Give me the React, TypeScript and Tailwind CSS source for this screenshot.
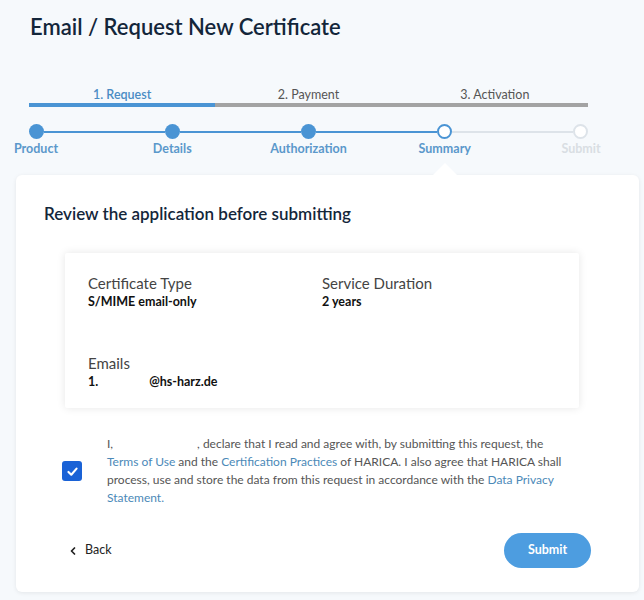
import { ChevronLeft } from "lucide-react";

const PHASES = [
  { label: "1. Request", active: true },
  { label: "2. Payment", active: false },
  { label: "3. Activation", active: false },
];

const STEPS = [
  { label: "Product", state: "done" },
  { label: "Details", state: "done" },
  { label: "Authorization", state: "done" },
  { label: "Summary", state: "current" },
  { label: "Submit", state: "todo" },
] as const;

const Circle = ({ state }: { state: "done" | "current" | "todo" }) => {
  if (state === "done")
    return <div className="h-[15px] w-[15px] shrink-0 rounded-full bg-[#4a94d4]" />;
  if (state === "current")
    return (
      <div className="h-[15px] w-[15px] shrink-0 rounded-full border-2 border-[#4a94d4] bg-white" />
    );
  return (
    <div className="h-[15px] w-[15px] shrink-0 rounded-full border-2 border-[#dde3e9] bg-white" />
  );
};

export default function App() {
  return (
    <div
      className="min-h-[600px] w-full overflow-hidden bg-[#f6f9fc] pb-[8px] text-[#333]"
      style={{ fontFamily: "Lato, 'Open Sans', sans-serif" }}
    >
      <h1 className="pl-[30px] pt-[12px] text-[22px] font-semibold leading-[30px] text-[#13263a]">
        Email / Request New Certificate
      </h1>

      {/* phases */}
      <div className="ml-[29px] mt-[45px] flex w-[559px]">
        {PHASES.map((p) => (
          <div key={p.label} className="flex flex-1 flex-col items-center">
            <span
              className={
                p.active
                  ? "text-[12.5px] font-semibold leading-[16px] text-[#4a8cc4]"
                  : "text-[12.5px] leading-[16px] text-[#555]"
              }
            >
              {p.label}
            </span>
            <div
              className={
                p.active ? "h-[4px] w-full bg-[#4a94d4]" : "h-[4px] w-full bg-[#a3a3a3]"
              }
            />
          </div>
        ))}
      </div>

      {/* stepper */}
      <div className="mt-[17px] flex items-center pl-[29px] pr-[56px]">
        {STEPS.map((s, i) => (
          <div
            key={s.label}
            className={i < STEPS.length - 1 ? "flex flex-1 items-center" : "flex items-center"}
          >
            <Circle state={s.state} />
            {i < STEPS.length - 1 && (
              <div
                className={
                  i < 3 ? "h-[2px] flex-1 bg-[#4a94d4]" : "h-[2px] flex-1 bg-[#dde3e9]"
                }
              />
            )}
          </div>
        ))}
      </div>
      <div className="mt-[2px] flex w-[617px] justify-between">
        {STEPS.map((s) => (
          <div key={s.label} className="flex w-[72px] justify-center">
            <span
              className={
                s.state === "todo"
                  ? "whitespace-nowrap text-[12.5px] font-bold leading-[16px] text-[#d9dee3]"
                  : "whitespace-nowrap text-[12.5px] font-bold leading-[16px] text-[#5b98cb]"
              }
            >
              {s.label}
            </span>
          </div>
        ))}
      </div>

      {/* card */}
      <div className="relative ml-[16px] mr-[5px] mt-[18px] rounded-[6px] bg-white pb-[24px] shadow-[0_1px_4px_rgba(0,0,0,0.08)]">
        <svg
          className="absolute -top-[12px] left-[416px]"
          width="26"
          height="13"
          viewBox="0 0 26 13"
        >
          <path d="M0 13 L13 0 L26 13 Z" fill="#fff" />
        </svg>

        <h2 className="pl-[28px] pt-[28px] text-[17px] font-semibold leading-[22px] text-[#13263a]">
          Review the application before submitting
        </h2>

        <div className="ml-[49px] mr-[60px] mt-[28px] rounded-[2px] bg-white px-[23px] pt-[20px] pb-[17px] shadow-[0_0_8px_rgba(0,0,0,0.1)]">
          <div className="grid grid-cols-[234px_1fr]">
            <div>
              <div className="text-[15px] leading-[20px] text-[#444]">Certificate Type</div>
              <div className="text-[12.5px] font-bold leading-[18px] text-[#111]">
                S/MIME email-only
              </div>
            </div>
            <div>
              <div className="text-[15px] leading-[20px] text-[#444]">Service Duration</div>
              <div className="text-[12.5px] font-bold leading-[18px] text-[#111]">2 years</div>
            </div>
          </div>
          <div className="mt-[42px]">
            <div className="text-[15px] leading-[20px] text-[#444]">Emails</div>
            <div className="text-[12.5px] font-bold leading-[18px] text-[#111]">
              1.<span className="inline-block w-[51px]" />@hs-harz.de
            </div>
          </div>
        </div>

        <div className="mt-[27px] flex items-center pl-[46px]">
          <div className="flex h-[20px] w-[20px] shrink-0 items-center justify-center rounded-[3px] bg-[#1a62d6]">
            <svg width="13" height="13" viewBox="0 0 16 16">
              <path
                d="M3 8.5 L6.5 12 L13 4.5"
                fill="none"
                stroke="#fff"
                strokeWidth="2.6"
                strokeLinecap="round"
                strokeLinejoin="round"
              />
            </svg>
          </div>
          <p className="ml-[25px] w-[470px] text-[12px] leading-[18px] text-[#555]">
            I,<span className="inline-block w-[84px]" />, declare that I read and agree with, by
            submitting this request, the <a className="text-[#4b89b8]">Terms of Use</a> and the{" "}
            <a className="text-[#4b89b8]">Certification Practices</a> of HARICA. I also agree that
            HARICA shall process, use and store the data from this request in accordance with the{" "}
            <a className="text-[#4b89b8]">Data Privacy Statement.</a>
          </p>
        </div>

        <div className="mt-[26px] flex items-center justify-between pl-[51px] pr-[48px]">
          <button className="flex items-center gap-[6px] text-[12.5px] text-[#222]">
            <ChevronLeft size={12} strokeWidth={3.5} />
            Back
          </button>
          <button className="h-[35px] w-[87px] rounded-full bg-[#4d9de0] text-[12.5px] font-bold text-white">
            Submit
          </button>
        </div>
      </div>
    </div>
  );
}
